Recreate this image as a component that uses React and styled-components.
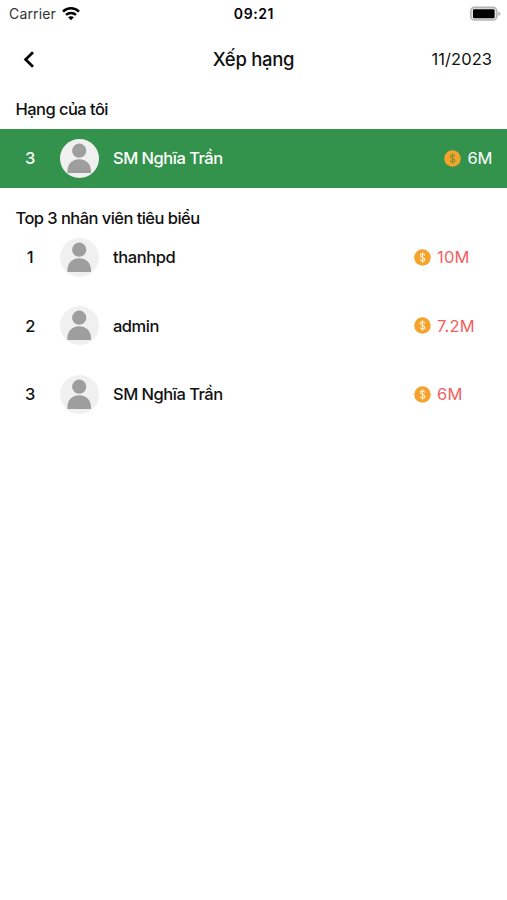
import React from 'react'
import styled, { createGlobalStyle } from 'styled-components'

const myRank = { rank: 3, name: 'SM Nghĩa Trần', score: '6M' }

const topStaff = [
  { rank: 1, name: 'thanhpd', score: '10M', spacing: '-0.4px' },
  { rank: 2, name: 'admin', score: '7.2M', spacing: '-0.5px' },
  { rank: 3, name: 'SM Nghĩa Trần', score: '6M' },
]

function WifiIcon() {
  return (
    <svg width="18" height="14" viewBox="0 0 18 14" fill="none" stroke="#000" strokeWidth="2.5">
      <path d="M1 4.6C5.4 0.2 12.6 0.2 17 4.6" />
      <path d="M4 7.9C6.8 5.2 11.2 5.2 14 7.9" />
      <path d="M9 13.2L6.1 10.3C7.7 8.9 10.3 8.9 11.9 10.3Z" fill="#000" stroke="none" />
    </svg>
  )
}

function BatteryIcon() {
  return (
    <svg width="32" height="16" viewBox="0 0 32 16">
      <rect x="1.8" y="1.4" width="26" height="12.6" rx="3.6" fill="#e4e4e4" stroke="#b4b4b4" strokeWidth="1.6" />
      <rect x="4" y="3.2" width="21.6" height="9" rx="1.2" fill="#000" />
      <path d="M29.3 5.4C31 6.1 31.4 7 31.4 7.8S31 9.5 29.3 10.2Z" fill="#b4b4b4" />
    </svg>
  )
}

function BackIcon() {
  return (
    <svg width="12" height="18" viewBox="0 0 12 18" fill="none" stroke="#000" strokeWidth="2.7">
      <path d="M10 1.2L2.6 8.5L10 15.8" />
    </svg>
  )
}

function Avatar() {
  return (
    <svg width="39" height="39" viewBox="0 0 39 39">
      <circle cx="19.5" cy="19.5" r="19.5" fill="#f0f0f0" />
      <circle cx="19.2" cy="11.7" r="7.1" fill="#9e9e9e" />
      <path d="M7.4 34V32C7.4 25.2 12.4 20.3 19.2 20.3S31 25.2 31 32V34Z" fill="#9e9e9e" />
    </svg>
  )
}

function Coin({ sign }) {
  return (
    <svg width="17" height="17" viewBox="0 0 17 17">
      <circle cx="8.5" cy="8.5" r="8.3" fill="#f5a32c" />
      <path
        d="M10.7 6.6C10.6 5.4 9.8 4.9 8.5 4.9S6.4 5.6 6.4 6.6C6.4 9 10.8 7.8 10.8 10.4C10.8 11.5 9.8 12.1 8.5 12.1S6.3 11.5 6.2 10.3M8.5 3.3V13.7"
        fill="none"
        stroke={sign}
        strokeWidth="1.1"
      />
    </svg>
  )
}

function RankRow({ item, mine }) {
  return (
    <Row $mine={mine}>
      <Rank $mine={mine}>{item.rank}</Rank>
      <Avatar />
      <Name $mine={mine} $spacing={item.spacing}>
        {item.name}
      </Name>
      <Score $mine={mine}>
        <Coin sign={mine ? '#7f932f' : '#fff0d8'} />
        <Amount $mine={mine}>{item.score}</Amount>
      </Score>
    </Row>
  )
}

export default function App() {
  return (
    <Screen>
      <GlobalStyle />
      <StatusBar>
        <Carrier>
          <span>Carrier</span>
          <WifiIcon />
        </Carrier>
        <Clock>09:21</Clock>
        <Battery>
          <BatteryIcon />
        </Battery>
      </StatusBar>
      <Header>
        <BackButton aria-label="Back">
          <BackIcon />
        </BackButton>
        <Title>Xếp hạng</Title>
        <Month>11/2023</Month>
      </Header>
      <SectionTitle>Hạng của tôi</SectionTitle>
      <RankRow item={myRank} mine />
      <SectionTitle $list>Top 3 nhân viên tiêu biểu</SectionTitle>
      <List>
        {topStaff.map((item) => (
          <RankRow key={item.rank} item={item} />
        ))}
      </List>
    </Screen>
  )
}

const GlobalStyle = createGlobalStyle`
* {
  box-sizing: border-box;
}
body {
  margin: 0;
  background: #fff;
}
svg {
  display: block;
  flex-shrink: 0;
}
`

const Screen = styled.div`
  min-height: 100vh;
  background: #fff;
  color: #111;
  font-family: Inter, 'Liberation Sans', sans-serif;
  font-size: 16.5px;
  letter-spacing: -0.55px;
`

const StatusBar = styled.div`
  display: grid;
  grid-template-columns: 1fr auto 1fr;
  align-items: center;
  height: 27px;
  padding: 0 6px 0 9px;
`

const Carrier = styled.div`
  display: flex;
  align-items: center;
  gap: 6px;
  font-size: 14px;
  letter-spacing: 0.15px;
  color: #333;
`

const Clock = styled.div`
  margin-left: -2px;
  font-size: 14px;
  font-weight: 600;
  letter-spacing: 0.6px;
  color: #000;
`

const Battery = styled.div`
  display: flex;
  justify-content: flex-end;
`

const Header = styled.div`
  display: grid;
  grid-template-columns: 1fr auto 1fr;
  align-items: center;
  height: 65px;
  padding: 0 15px;
`

const BackButton = styled.button`
  width: 12px;
  margin-left: 8px;
  padding: 0;
  border: 0;
  background: none;
`

const Title = styled.h1`
  margin: 0;
  font-size: 18.5px;
  font-weight: 500;
  line-height: 24px;
  padding-bottom: 1px;
  letter-spacing: -0.3px;
`

const Month = styled.div`
  padding-bottom: 1px;
  text-align: right;
  font-size: 16.5px;
  letter-spacing: 0.05px;
`

const SectionTitle = styled.h2`
  display: flex;
  align-items: center;
  height: ${(props) => (props.$list ? '39.5px' : '37px')};
  margin: 0;
  padding: ${(props) => (props.$list ? '19.5px 15.5px 0' : '0 15.5px 3px')};
  font-size: 16.5px;
  font-weight: 500;
`

const List = styled.div`
  display: flex;
  flex-direction: column;
  gap: 9.5px;
`

const Row = styled.div`
  display: flex;
  align-items: center;
  height: 59px;
  padding-right: ${(props) => (props.$mine ? '15px' : '0')};
  background: ${(props) => (props.$mine ? '#33934c' : 'transparent')};
  color: ${(props) => (props.$mine ? '#fff' : '#111')};
`

const Rank = styled.div`
  width: 60px;
  padding-bottom: ${(props) => (props.$mine ? '1px' : '0')};
  text-align: center;
  font-weight: 500;
`

const Name = styled.div`
  flex: 1;
  margin-left: 14px;
  padding-bottom: ${(props) => (props.$mine ? '1px' : '0')};
  font-weight: 500;
  letter-spacing: ${(props) => props.$spacing || '-0.5px'};
`

const Score = styled.div`
  display: flex;
  align-items: center;
  gap: 6px;
  width: ${(props) => (props.$mine ? 'auto' : '93px')};
  letter-spacing: ${(props) => (props.$mine ? '-0.3px' : '0.2px')};
  color: ${(props) => (props.$mine ? '#fff' : '#f2605f')};
`

const Amount = styled.span`
  padding-bottom: ${(props) => (props.$mine ? '1px' : '0')};
`
